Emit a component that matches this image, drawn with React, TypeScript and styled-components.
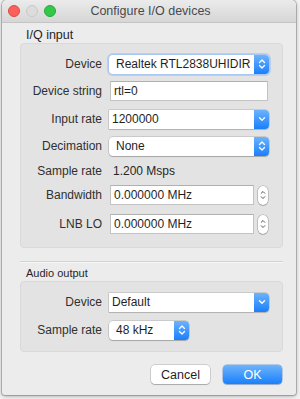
import React from "react";
import styled, { createGlobalStyle } from "styled-components";

const GlobalStyle = createGlobalStyle`
  html, body {
    margin: 0;
    padding: 0;
    background: #f3f3f3;
  }
  body {
    font-family: "Liberation Sans", Arial, Helvetica, sans-serif;
    font-size: 12px;
    color: #262626;
  }
`;

const Page = styled.div`
  width: 300px;
  height: 399px;
  padding: 0 0 0 2px;
  box-sizing: border-box;
  overflow: hidden;
`;

const Window = styled.div`
  width: 294px;
  height: 395px;
  display: flex;
  flex-direction: column;
  background: #ececec;
  border-radius: 5px 5px 3px 3px;
  box-shadow: 0 0 0 1px rgba(0, 0, 0, 0.18), 0 1px 4px rgba(0, 0, 0, 0.35);
  overflow: hidden;
`;

const TitleBar = styled.div`
  position: relative;
  height: 22px;
  flex-shrink: 0;
  display: flex;
  align-items: center;
  justify-content: center;
  background: linear-gradient(#ebebeb, #d6d6d6);
  border-bottom: 1px solid #c4c4c4;
`;

const Lights = styled.div`
  position: absolute;
  left: 6px;
  top: 5px;
  display: flex;
  gap: 6px;
`;

const Light = styled.span<{ $fill: string; $edge: string }>`
  width: 12px;
  height: 12px;
  border-radius: 50%;
  box-sizing: border-box;
  background: ${({ $fill }) => $fill};
  border: 1px solid ${({ $edge }) => $edge};
`;

const Title = styled.div`
  font-size: 12.5px;
  color: #4a4a4a;
  margin-left: 3px;
`;

const Content = styled.div`
  display: flex;
  flex-direction: column;
  padding: 0 13px 0 18px;
`;

const SectionLabel = styled.div<{ $size: number; $mt: number }>`
  font-size: ${({ $size }) => $size}px;
  line-height: 15px;
  padding-left: 6px;
  margin-top: ${({ $mt }) => $mt}px;
  color: #262626;
`;

const GroupBox = styled.div<{ $pt: number; $pb: number }>`
  background: #e3e3e3;
  border: 1px solid #d9d9d9;
  border-radius: 4px;
  padding: ${({ $pt }) => $pt}px 13px ${({ $pb }) => $pb}px 0;
  display: flex;
  flex-direction: column;
`;

const FormRow = styled.div<{ $mt?: number }>`
  display: grid;
  grid-template-columns: 81px 1fr;
  column-gap: 7px;
  align-items: center;
  height: 20px;
  margin-top: ${({ $mt }) => $mt ?? 0}px;
`;

const Label = styled.div`
  text-align: right;
  color: #303030;
  white-space: nowrap;
`;

const Value = styled.div`
  padding-left: 4px;
  color: #262626;
`;

const Popup = styled.div<{ $width?: number; $focus?: boolean }>`
  height: 19px;
  width: ${({ $width }) => ($width ? `${$width}px` : "100%")};
  box-sizing: border-box;
  display: flex;
  align-items: stretch;
  background: #fff;
  border-radius: 4px;
  box-shadow: ${({ $focus }) =>
    $focus
      ? "0 0 0 1px #a9c7f3, 0 0 0 2px rgba(140, 180, 240, 0.45)"
      : "0 0 0 0.5px rgba(0,0,0,0.22), 0 1px 1px rgba(0,0,0,0.18)"};
`;

const PopupText = styled.div<{ $pl: number }>`
  flex: 1;
  display: flex;
  align-items: center;
  padding-left: ${({ $pl }) => $pl}px;
  color: #1f1f1f;
  white-space: nowrap;
  overflow: hidden;
`;

const ArrowButton = styled.div`
  width: 15px;
  flex-shrink: 0;
  display: flex;
  align-items: center;
  justify-content: center;
  background: linear-gradient(#6cb3fb, #1a7ffb);
  border-radius: 0 4px 4px 0;
`;

const ComboField = styled.div`
  height: 19px;
  display: flex;
  align-items: stretch;
  box-sizing: border-box;
  background: #fff;
  border-radius: 0 4px 4px 0;
  box-shadow: 0 0 0 0.5px rgba(0,0,0,0.22), 0 1px 1px rgba(0,0,0,0.12);
`;

const FieldRow = styled.div`
  display: flex;
  align-items: center;
  gap: 4px;
  padding-right: 1px;
`;

const TextField = styled.div`
  flex: 1;
  height: 20px;
  box-sizing: border-box;
  display: flex;
  align-items: center;
  padding-left: 3px;
  margin-left: 1px;
  background: #fff;
  border: 1px solid #c3c3c3;
  border-top-color: #b0b0b0;
  color: #1f1f1f;
`;

const Stepper = styled.div`
  width: 10px;
  height: 19px;
  box-sizing: border-box;
  flex-shrink: 0;
  display: flex;
  align-items: center;
  justify-content: center;
  background: #fff;
  border-radius: 5px;
  box-shadow: 0 0 0 0.5px rgba(0,0,0,0.3), 0 1px 1px rgba(0,0,0,0.12);
`;

const Separator = styled.div`
  height: 1px;
  margin-top: 13px;
  background: #d3d3d3;
  border-bottom: 1px solid #f6f6f6;
`;

const ButtonRow = styled.div`
  display: flex;
  justify-content: flex-end;
  gap: 13px;
  margin-top: 13px;
  padding-right: 1px;
`;

const PushButton = styled.div<{ $primary?: boolean }>`
  width: 59px;
  height: 19px;
  display: flex;
  align-items: center;
  justify-content: center;
  border-radius: 4px;
  font-size: 12.5px;
  color: ${({ $primary }) => ($primary ? "#fff" : "#1f1f1f")};
  background: ${({ $primary }) =>
    $primary ? "linear-gradient(#6db4fb, #1a80fb)" : "#fff"};
  box-shadow: ${({ $primary }) =>
    $primary
      ? "0 0 0 0.5px rgba(20,90,200,0.5), 0 1px 1px rgba(0,0,0,0.15)"
      : "0 0 0 0.5px rgba(0,0,0,0.25), 0 1px 1px rgba(0,0,0,0.18)"};
`;

const UpDown = ({ color = "#fff" }: { color?: string }) => (
  <svg width="8" height="12" viewBox="0 0 8 12">
    <path d="M1.5 4.5 L4 2 L6.5 4.5" fill="none" stroke={color} strokeWidth="1.3" strokeLinecap="round" strokeLinejoin="round" />
    <path d="M1.5 7.5 L4 10 L6.5 7.5" fill="none" stroke={color} strokeWidth="1.3" strokeLinecap="round" strokeLinejoin="round" />
  </svg>
);

const Down = () => (
  <svg width="8" height="6" viewBox="0 0 8 6">
    <path d="M1.5 1.8 L4 4.2 L6.5 1.8" fill="none" stroke="#fff" strokeWidth="1.3" strokeLinecap="round" strokeLinejoin="round" />
  </svg>
);

const SmallUpDown = () => (
  <svg width="6" height="12" viewBox="0 0 6 12">
    <path d="M1.2 4.3 L3 2.5 L4.8 4.3" fill="none" stroke="#555" strokeWidth="1" strokeLinecap="round" strokeLinejoin="round" />
    <path d="M1.2 7.7 L3 9.5 L4.8 7.7" fill="none" stroke="#555" strokeWidth="1" strokeLinecap="round" strokeLinejoin="round" />
  </svg>
);

const PopupButton = ({ text, width, focus }: { text: string; width?: number; focus?: boolean }) => (
  <Popup $width={width} $focus={focus}>
    <PopupText $pl={7}>{text}</PopupText>
    <ArrowButton>
      <UpDown />
    </ArrowButton>
  </Popup>
);

const EditableCombo = ({ text }: { text: string }) => (
  <ComboField>
    <PopupText $pl={3}>{text}</PopupText>
    <ArrowButton>
      <Down />
    </ArrowButton>
  </ComboField>
);

const SpinField = ({ text }: { text: string }) => (
  <FieldRow>
    <TextField>{text}</TextField>
    <Stepper>
      <SmallUpDown />
    </Stepper>
  </FieldRow>
);

export default function App() {
  return (
    <>
      <GlobalStyle />
      <Page>
        <Window>
          <TitleBar>
            <Lights>
              <Light $fill="#fc605b" $edge="#de4a45" />
              <Light $fill="#dcdcdc" $edge="#c9c9c9" />
              <Light $fill="#34c84a" $edge="#29a83a" />
            </Lights>
            <Title>Configure I/O devices</Title>
          </TitleBar>

          <Content>
            <SectionLabel $size={12.5} $mt={5}>I/Q input</SectionLabel>
            <GroupBox $pt={10} $pb={13}>
              <FormRow>
                <Label>Device</Label>
                <PopupButton text="Realtek RTL2838UHIDIR" focus />
              </FormRow>
              <FormRow $mt={7}>
                <Label>Device string</Label>
                <FieldRow>
                  <TextField>rtl=0</TextField>
                </FieldRow>
              </FormRow>
              <FormRow $mt={8}>
                <Label>Input rate</Label>
                <EditableCombo text="1200000" />
              </FormRow>
              <FormRow $mt={7}>
                <Label>Decimation</Label>
                <PopupButton text="None" />
              </FormRow>
              <FormRow $mt={5}>
                <Label>Sample rate</Label>
                <Value>1.200 Msps</Value>
              </FormRow>
              <FormRow $mt={4}>
                <Label>Bandwidth</Label>
                <SpinField text="0.000000 MHz" />
              </FormRow>
              <FormRow $mt={9}>
                <Label>LNB LO</Label>
                <SpinField text="0.000000 MHz" />
              </FormRow>
            </GroupBox>

            <Separator />

            <SectionLabel $size={11} $mt={3}>Audio output</SectionLabel>
            <GroupBox $pt={10} $pb={11}>
              <FormRow>
                <Label>Device</Label>
                <EditableCombo text="Default" />
              </FormRow>
              <FormRow $mt={8}>
                <Label>Sample rate</Label>
                <PopupButton text="48 kHz" width={80} />
              </FormRow>
            </GroupBox>

            <ButtonRow>
              <PushButton>Cancel</PushButton>
              <PushButton $primary>OK</PushButton>
            </ButtonRow>
          </Content>
        </Window>
      </Page>
    </>
  );
}
